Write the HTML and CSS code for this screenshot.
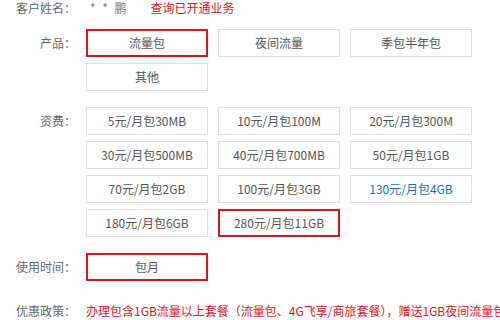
FILE: index.html
```html
<!DOCTYPE html>
<html lang="zh-CN">
<head>
    <meta charset="UTF-8">
    <meta name="viewport" content="width=device-width, initial-scale=1.0">
    <title>流量包办理</title>
    <link rel="stylesheet" href="styles.css">
</head>
<body>
    <div class="panel">
        <div class="row row-info">
            <span class="label">客户姓名：</span>
            <span class="value">* * 鹏</span>
            <span class="query">查询已开通业务</span>
        </div>

        <div class="row">
            <span class="label">产品：</span>
            <div class="opts">
                <div class="opt selected">流量包</div>
                <div class="opt">夜间流量</div>
                <div class="opt">季包半年包</div>
                <div class="opt">其他</div>
            </div>
        </div>

        <div class="row">
            <span class="label">资费：</span>
            <div class="opts">
                <div class="opt">5元/月包30MB</div>
                <div class="opt">10元/月包100M</div>
                <div class="opt">20元/月包300M</div>
                <div class="opt">30元/月包500MB</div>
                <div class="opt">40元/月包700MB</div>
                <div class="opt">50元/月包1GB</div>
                <div class="opt">70元/月包2GB</div>
                <div class="opt">100元/月包3GB</div>
                <div class="opt hot">130元/月包4GB</div>
                <div class="opt">180元/月包6GB</div>
                <div class="opt selected">280元/月包11GB</div>
            </div>
        </div>

        <div class="row">
            <span class="label">使用时间：</span>
            <div class="opts">
                <div class="opt selected">包月</div>
            </div>
        </div>

        <div class="row row-policy">
            <span class="label">优惠政策：</span>
            <span class="policy">办理包含1GB流量以上套餐（流量包、4G飞享/商旅套餐），赠送1GB夜间流量包</span>
        </div>
    </div>
</body>
</html>
```

FILE: styles.css
```css
html, body {
    height: 320px;
}

body {
    margin: 0;
    padding: 0;
    background: #fff;
    font-family: "Noto Sans CJK SC", "Microsoft YaHei", sans-serif;
    font-size: 12px;
    color: #666;
    overflow: hidden;
}

.panel {
    width: 500px;
    white-space: nowrap;
}

.row {
    display: flex;
    align-items: flex-start;
    margin-bottom: 16px;
}

.label {
    width: 76px;
    text-align: right;
    line-height: 28px;
    flex-shrink: 0;
}

/* 第一行：客户信息 */
.row-info {
    margin-bottom: 13px;
}

.row-info .label,
.row-info .value,
.row-info .query {
    line-height: 16px;
}

.value {
    margin-left: 14px;
    color: #777;
    letter-spacing: 2px;
}

.query {
    margin-left: 22px;
    color: #e4141e;
}

.opts {
    margin-left: 10px;
    display: grid;
    grid-template-columns: repeat(3, 122px);
    gap: 6px 10px;
}

.opt {
    box-sizing: border-box;
    height: 28px;
    line-height: 26px;
    border: 1px solid #dedede;
    text-align: center;
    color: #555;
    font-size: 12px;
}

.opt.selected {
    border: 2px solid #d9141c;
    line-height: 24px;
}

.opt.hot {
    color: #1f6fb0;
}

.row-policy {
    margin-top: 2px;
    margin-bottom: 0;
}

.policy {
    margin-left: 10px;
    line-height: 28px;
    color: #e4141e;
}
```
